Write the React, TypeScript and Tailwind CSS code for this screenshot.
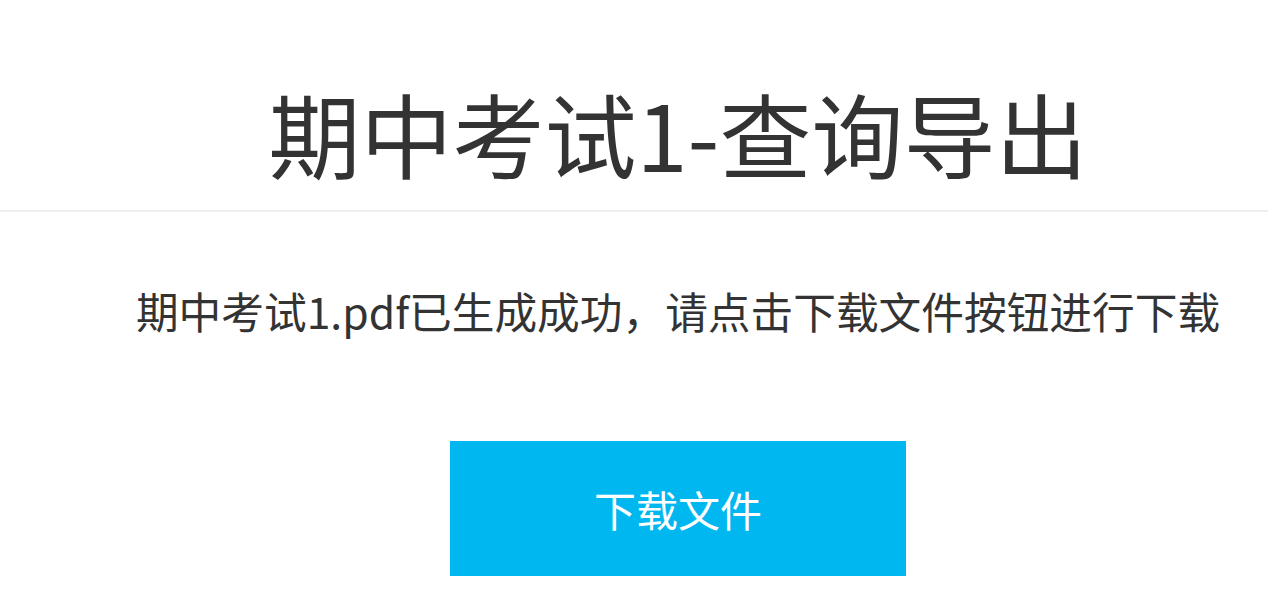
import React from 'react';

const App = () => {
  return (
    <div
      className="min-h-screen bg-white text-[#333333]"
      style={{ fontFamily: '"Microsoft YaHei", "Noto Sans CJK SC", "Noto Sans", sans-serif' }}
    >
      {/* Title */}
      <div className="border-b-2 border-[#eeeeee] pl-[88px] pt-[84px] pb-[30px]">
        <h1 className="text-center text-[92px] leading-[96px] font-normal">期中考试1-查询导出</h1>
      </div>

      {/* Message + button */}
      <div className="pl-[88px] pt-[74px] flex flex-col items-center">
        <p className="text-[42.7px] leading-[48px]">期中考试1.pdf已生成成功，请点击下载文件按钮进行下载</p>
        <button className="mt-[107px] w-[456px] h-[135px] bg-[#00b8ef] text-white text-[42px] leading-none">
          下载文件
        </button>
      </div>
    </div>
  );
};

export default App;
